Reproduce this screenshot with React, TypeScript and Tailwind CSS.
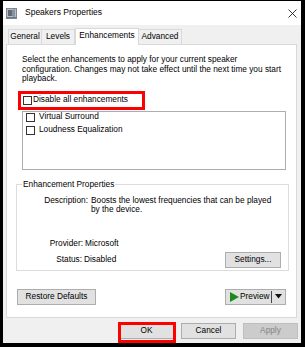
import React from "react";

const font = { fontFamily: '"Liberation Sans", Arial, sans-serif' };

function Check() {
  return <span className="block w-[9px] h-[9px] border border-[#333333] bg-white shrink-0" />;
}

function Btn({ children, w, disabled }: { children: React.ReactNode; w: number; disabled?: boolean }) {
  return (
    <div
      style={{ width: w }}
      className={
        "h-[16px] flex items-center justify-center border text-[8.3px] " +
        (disabled ? "bg-[#cccccc] border-[#bfbfbf] text-[#838383]" : "bg-[#e1e1e1] border-[#adadad] text-black")
      }
    >
      {children}
    </div>
  );
}

export default function App() {
  return (
    <div className="w-[305px] h-[347px] bg-black pt-[1px] pl-[3px]" style={font}>
      <div className="relative w-[298px] h-[342px] bg-[#f0f0f0] flex flex-col text-black text-[8.3px] leading-[9.5px]">
        {/* Title bar */}
        <div className="h-[24px] bg-white flex items-center shrink-0">
          <svg className="ml-[3px]" width="11" height="11" viewBox="0 0 11 11">
            <rect x="0.5" y="0.5" width="10" height="10" fill="#b8c0c8" stroke="#7d8791" />
            <rect x="2" y="2" width="4" height="6" fill="#5f6a75" />
            <path d="M6 2 L9 0.8 L9 9.2 L6 8 Z" fill="#8893a0" />
            <rect x="1" y="9" width="9" height="1" fill="#6c7680" />
          </svg>
          <span className="ml-[8px] text-[8.5px] text-black">Speakers Properties</span>
          <svg className="ml-auto mr-[4px]" width="9" height="9" viewBox="0 0 9 9">
            <path d="M0.5 0.5 L8.5 8.5 M8.5 0.5 L0.5 8.5" stroke="#222" strokeWidth="0.9" />
          </svg>
        </div>
        {/* Tabs */}
        <div className="h-[19px] flex items-end pl-[5px] shrink-0 relative z-10">
          <div className="w-[34px] h-[15px] border border-[#d9d9d9] border-b-0 bg-[#f0f0f0] flex items-center justify-center">General</div>
          <div className="w-[33px] h-[15px] border border-[#d9d9d9] border-b-0 border-l-0 bg-[#f0f0f0] flex items-center justify-center">Levels</div>
          <div className="w-[64px] h-[17px] -mb-px border border-[#d9d9d9] border-b-0 bg-white flex items-start pt-[2px] justify-center">Enhancements</div>
          <div className="w-[43px] h-[15px] border border-[#d9d9d9] border-b-0 border-l-0 bg-[#f0f0f0] flex items-center justify-center">Advanced</div>
        </div>
        {/* Panel */}
        <div className="ml-[3px] w-[291px] h-[274px] border border-[#d9d9d9] bg-white flex flex-col shrink-0">
          <p className="ml-[15px] mt-[10px] whitespace-nowrap">
            Select the enhancements to apply for your current speaker
            <br />
            configuration. Changes may not take effect until the next time you start
            <br />
            playback.
          </p>
          <div className="ml-[16px] mt-[12px] flex items-center gap-[1px] h-[9px]">
            <Check />
            <span>Disable all enhancements</span>
          </div>
          <div className="ml-[15px] mt-[6px] w-[264px] h-[59px] border border-[#abadb3] pl-[3px] pt-[1px] flex flex-col gap-[4px]">
            <div className="flex items-center gap-[4px] h-[9px]">
              <Check />
              <span>Virtual Surround</span>
            </div>
            <div className="flex items-center gap-[4px] h-[9px]">
              <Check />
              <span>Loudness Equalization</span>
            </div>
          </div>
          <div className="relative ml-[9px] mt-[14px] w-[273px] h-[87px] border border-[#dcdcdc]">
            <span className="absolute left-[5px] -top-[5px] bg-white px-[1px]">Enhancement Properties</span>
            <div className="flex mt-[11px]">
              <span className="w-[71px] text-right">Description:</span>
              <span className="ml-[3px]">
                Boosts the lowest frequencies that can be played
                <br />
                by the device.
              </span>
            </div>
            <div className="flex mt-[24px]">
              <span className="w-[66px] text-right">Provider:</span>
              <span className="ml-[2px]">Microsoft</span>
            </div>
            <div className="flex items-center justify-between mt-[4px] pr-[7px]">
              <div className="flex">
                <span className="w-[65px] text-right">Status:</span>
                <span className="ml-[2px]">Disabled</span>
              </div>
              <Btn w={56}>Settings...</Btn>
            </div>
          </div>
          <div className="flex justify-between items-center mt-[18px] px-[10px]">
            <Btn w={79}>Restore Defaults</Btn>
            <div className="w-[61px] h-[16px] border border-[#adadad] bg-[#e1e1e1] flex items-center">
              <svg className="ml-[4px]" width="9" height="10" viewBox="0 0 9 10">
                <path d="M0 0 L9 5 L0 10 Z" fill="#1e8a1e" />
              </svg>
              <span className="ml-[1px] text-[8.3px]">Preview</span>
              <span className="ml-auto w-px h-[12px] bg-[#444]" />
              <svg className="mx-[3px]" width="7" height="5" viewBox="0 0 7 5">
                <path d="M0 0 L7 0 L3.5 4.5 Z" fill="#111" />
              </svg>
            </div>
          </div>
        </div>
        {/* Bottom buttons */}
        <div className="flex-1 flex items-center justify-end gap-[7px] pr-[3px]">
          <Btn w={55}>OK</Btn>
          <Btn w={55}>Cancel</Btn>
          <Btn w={55} disabled>Apply</Btn>
        </div>
        {/* Annotation boxes */}
        <div className="absolute left-[15px] top-[90px] w-[127px] h-[19px] border-[3px] border-[#ff0000]" />
        <div className="absolute left-[115px] top-[321px] w-[58px] h-[21px] border-[3px] border-[#ff0000]" />
      </div>
    </div>
  );
}
